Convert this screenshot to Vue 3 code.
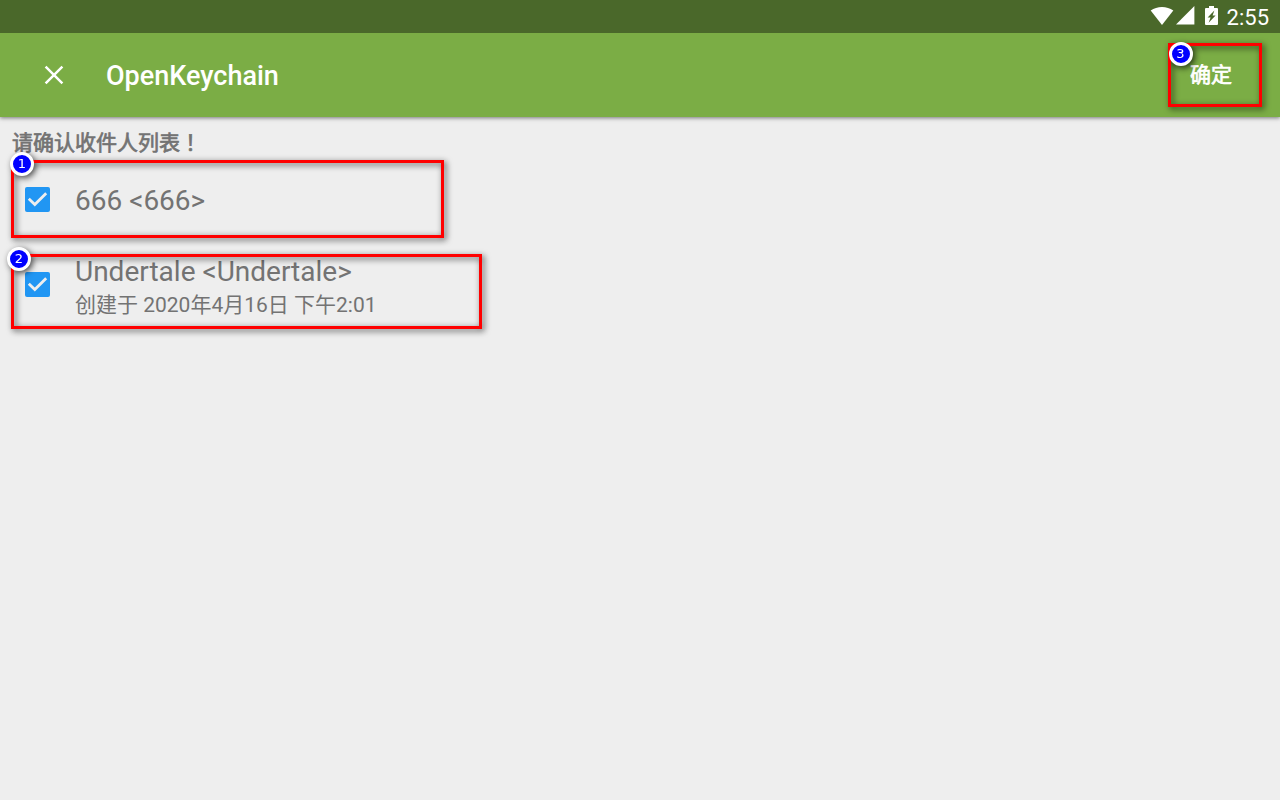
<template>
  <div class="screen">
    <header class="status-bar">
      <svg class="wifi" viewBox="0 0 24 20" width="24" height="20">
        <path d="M12 19 L0.7 4.6 C7 -0.3 17 -0.3 23.3 4.6 Z" fill="#fff" />
      </svg>
      <svg class="signal" viewBox="0 0 19 19" width="19" height="19">
        <path d="M18.4 0 V18.6 H0 Z" fill="#fff" />
      </svg>
      <svg class="battery" viewBox="0 0 13 19" width="13" height="19">
        <path fill="#fff" fill-rule="evenodd" d="M4 0h5v2h3q1 0 1 1v15q0 1-1 1H1q-1 0-1-1V3q0-1 1-1h3z M9.4 4.4 L2.6 11.4 H5.6 L3.6 16.8 L10.6 9.4 H7.6 Z" />
      </svg>
      <span class="clock">2:55</span>
    </header>

    <nav class="app-bar">
      <button class="close" aria-label="关闭">
        <svg viewBox="0 0 20 20" width="20" height="20">
          <path d="M1.6 1.6 L18.4 18.4 M18.4 1.6 L1.6 18.4" stroke="#fff" stroke-width="2.5" fill="none" />
        </svg>
      </button>
      <h1>OpenKeychain</h1>
      <button class="confirm">确定</button>
    </nav>

    <main>
      <h2>请确认收件人列表<span class="mark">！</span></h2>
      <ul class="recipients">
        <li v-for="item in recipients" :key="item.name" @click="item.checked = !item.checked">
          <span class="checkbox" :class="{ checked: item.checked }">
            <svg v-if="item.checked" viewBox="0 0 25 25" width="25" height="25">
              <path d="M3.8 11.8 L9.8 17.6 L21.2 6.3" stroke="#eee" stroke-width="2.8" fill="none" />
            </svg>
          </span>
          <div class="info" :class="{ detailed: item.created }">
            <p class="name">{{ item.name }}</p>
            <p v-if="item.created" class="created">{{ item.created }}</p>
          </div>
        </li>
      </ul>
    </main>

    <!-- tutorial markers drawn over the app -->
    <div v-for="n in 3" :key="n" class="marker" :class="`marker-${n}`">
      <span class="badge">{{ n }}</span>
    </div>
  </div>
</template>

<script setup>
import { ref } from 'vue'

const recipients = ref([
  { name: '666 <666>', created: '', checked: true },
  { name: 'Undertale <Undertale>', created: '创建于 2020年4月16日 下午2:01', checked: true },
])
</script>

<style>
body {
  margin: 0;
}
</style>

<style scoped>
.screen {
  position: relative;
  height: 100vh;
  overflow: hidden;
  background: #eeeeee;
  color: #737373;
  font-family: Roboto, "Noto Sans CJK SC", sans-serif;
}

.status-bar {
  display: flex;
  position: relative;
  z-index: 1;
  align-items: flex-start;
  justify-content: flex-end;
  box-sizing: border-box;
  height: 33px;
  padding: 6px 11px 0 0;
  background: #4a682a;
  color: #fff;
}

.signal {
  margin-left: 2px;
}

.battery {
  margin-left: 10px;
}

.clock {
  margin-left: 9px;
  font-size: 22px;
  line-height: 24px;
}

.app-bar {
  display: flex;
  align-items: center;
  position: relative;
  box-sizing: border-box;
  height: 84px;
  padding: 0 48px 0 44px;
  background: #7bad45;
  box-shadow: 0 1px 4px rgba(0, 0, 0, 0.5);
  color: #fff;
}

button {
  padding: 0;
  border: 0;
  background: none;
  color: inherit;
  font-family: inherit;
}

.close {
  display: flex;
}

h1 {
  margin: 1px 0 0 42px;
  font-size: 27px;
  font-weight: 500;
  line-height: 32px;
}

.confirm {
  margin-left: auto;
  font-size: 21px;
  line-height: 30px;
  -webkit-text-stroke: 0.7px currentColor;
}

h2 {
  height: 40px;
  margin: 0;
  padding-left: 12px;
  box-sizing: border-box;
  padding-top: 11px;
  font-size: 21px;
  font-weight: 400;
  line-height: 30px;
  -webkit-text-stroke: 0.7px currentColor;
}

/* centred full-width exclamation mark */
.mark {
  font-family: "Noto Sans CJK TC", sans-serif;
  line-height: 1;
}

.recipients {
  margin: 0;
  padding: 0;
  list-style: none;
}

.recipients li {
  display: flex;
  align-items: center;
  height: 85px;
  padding-left: 25px;
}

.checkbox {
  box-sizing: border-box;
  width: 25px;
  height: 25px;
  border: 2px solid #737373;
  border-radius: 2px;
}

.checkbox.checked {
  border: 0;
  background: #2196f3;
}

.checkbox svg {
  display: block;
}

.info {
  margin-left: 25px;
}

.info.detailed {
  padding-top: 5px;
}

.info p {
  margin: 0;
  white-space: nowrap;
}

.name {
  padding-top: 1px;
  font-size: 28px;
  line-height: 33px;
}

.created {
  padding-top: 2px;
  font-size: 21px;
  line-height: 31px;
}

.marker {
  position: absolute;
  box-sizing: border-box;
  border: 3px solid #ff0000;
  filter: drop-shadow(2px 2px 3px rgba(0, 0, 0, 0.7));
}

.marker-1 {
  left: 11px;
  top: 160px;
  width: 433px;
  height: 78px;
}

.marker-2 {
  left: 11px;
  top: 254px;
  width: 471px;
  height: 75px;
}

.marker-3 {
  left: 1168px;
  top: 43px;
  width: 94px;
  height: 64px;
}

.badge {
  position: absolute;
  left: -4px;
  top: -11px;
  box-sizing: border-box;
  width: 24px;
  height: 24px;
  border: 3px solid #fff;
  border-radius: 50%;
  background: #0000ff;
  color: #fff;
  font-family: "DejaVu Sans", sans-serif;
  font-size: 13px;
  line-height: 18px;
  text-align: center;
}

.marker-2 .badge {
  left: -7px;
  top: -10px;
}

.marker-3 .badge {
  left: -2.5px;
  top: -4.5px;
}
</style>
